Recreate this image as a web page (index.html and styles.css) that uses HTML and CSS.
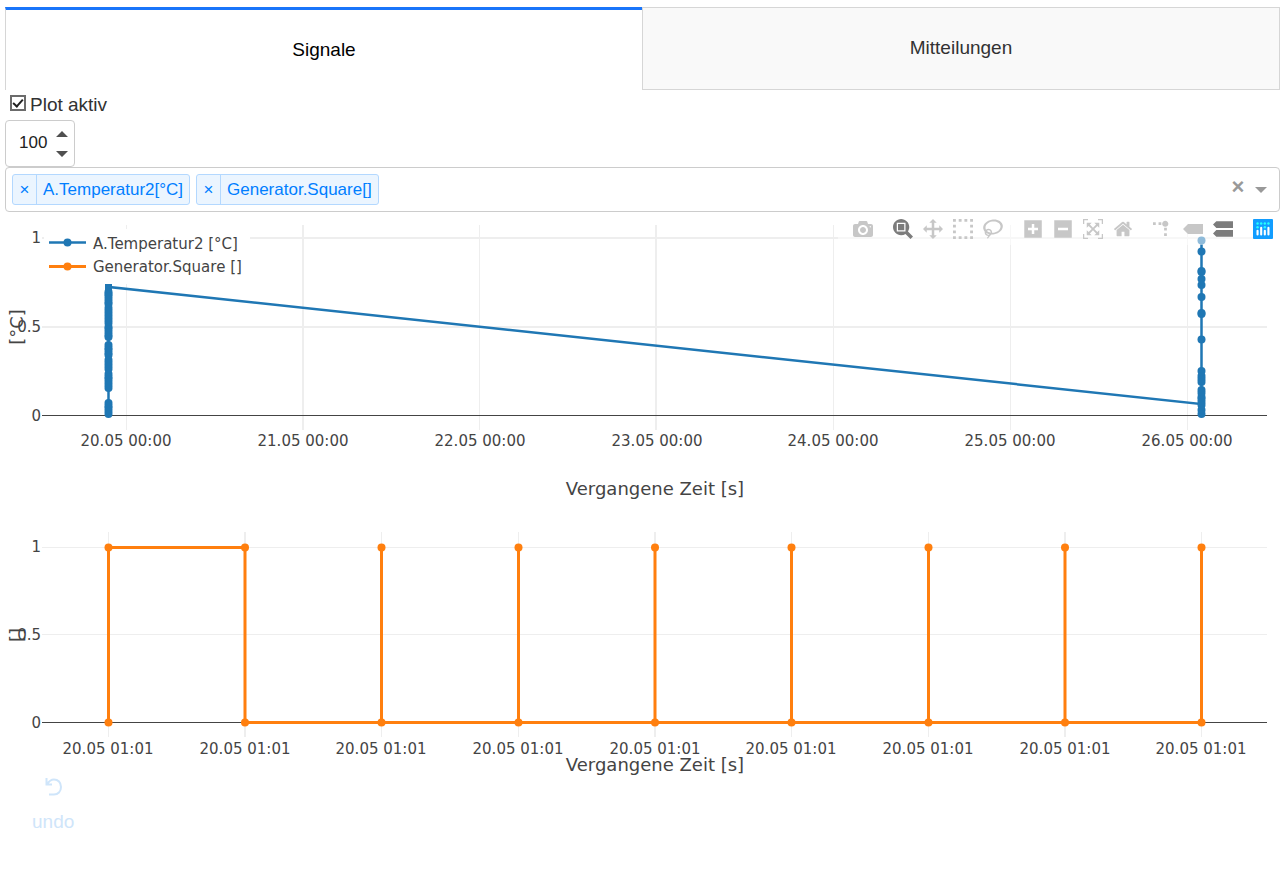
FILE: index.html
```html
<!DOCTYPE html>
<html lang="de">
<head>
<meta charset="utf-8">
<meta name="viewport" content="width=device-width, initial-scale=1">
<title>Signale</title>
<link rel="stylesheet" href="styles.css">
</head>
<body>
<main class="page">
  <div class="tabs" role="tablist">
    <button class="tab tab-selected" type="button" role="tab" aria-selected="true">Signale</button>
    <button class="tab" type="button" role="tab" aria-selected="false">Mitteilungen</button>
  </div>

  <label class="check-row"><input class="check" type="checkbox" checked>Plot aktiv</label>

  <div class="number-box">
    <input class="number-input" type="number" value="100" aria-label="Anzahl">
    <svg class="spinner" viewBox="0 0 12 28" aria-hidden="true"><path d="M0 7L6 1l6 6zM0 21h12l-6 6z"/></svg>
  </div>

  <div class="select-box">
    <div class="chips">
      <span class="chip"><button class="chip-remove" type="button" aria-label="A.Temperatur2 entfernen">×</button><span class="chip-label">A.Temperatur2[°C]</span></span>
      <span class="chip"><button class="chip-remove" type="button" aria-label="Generator.Square entfernen">×</button><span class="chip-label">Generator.Square[]</span></span>
    </div>
    <button class="clear" type="button" aria-label="Alle entfernen">×</button>
    <button class="open" type="button" aria-label="Öffnen"><svg viewBox="0 0 12 6"><path d="M0 0h12L6 6z"/></svg></button>
  </div>

  <div class="plot">
    <svg class="chart" viewBox="5 212 1275 563" role="img" aria-label="Signalverlauf">
      <defs>
        <circle id="dot" r="4"/>
      </defs>
      <g class="grid">
        <path d="M126.5 225V430M479.500 225V430M833.500 225V430M1010.500 225V430M1187.500 225V430"/>
        <path class="wide" d="M303 225V430M656 225V430M42 238H1267M42 327H1267"/>
        <path d="M42 547.500H1267M42 634.500H1267M108.500 532V737M381.500 532V737M518.500 532V737M791.500 532V737M928.500 532V737M1201.500 532V737"/>
        <path class="wide" d="M245 532V737M655 532V737M1065 532V737"/>
      </g>
      <path class="zero" d="M42 415.500H1267M42 722.500H1267"/>

      <g class="blue">
        <path class="line" d="M108.500 414V287L1201.500 404V414V241"/>
        <rect class="fill" x="105" y="284" width="7" height="9"/>
        <g class="fill" id="left-dots"></g>
        <g class="fill" id="right-dots"></g>
      </g>

      <g class="orange">
        <path class="line" d="M108.500 722.500V547.500H245V722.500H1201.500V547.500M381.500 722.500V547.500M518.500 722.500V547.500M655 722.500V547.500M791.500 722.500V547.500M928.500 722.500V547.500M1065 722.500V547.500"/>
        <g class="fill" id="square-dots"></g>
      </g>

      <rect class="legend-bg" x="44" y="229" width="206" height="55"/>
      <g class="blue"><path class="line" d="M49 242.500H86"/><use class="fill" href="#dot" x="67.500" y="242.500"/></g>
      <g class="orange"><path class="line" d="M49 266.500H86"/><use class="fill" href="#dot" x="67.500" y="266.500"/></g>
      <g class="small">
        <text x="93" y="249">A.Temperatur2 [°C]</text>
        <text x="93" y="272">Generator.Square []</text>
      </g>

      <g class="small end">
        <text x="41" y="243">1</text><text x="41" y="332">0.5</text><text x="41" y="421">0</text>
        <text x="41" y="552">1</text><text x="41" y="640">0.5</text><text x="41" y="728">0</text>
      </g>
      <g class="small middle">
        <text x="126" y="446">20.05 00:00</text><text x="303" y="446">21.05 00:00</text><text x="480" y="446">22.05 00:00</text><text x="657" y="446">23.05 00:00</text><text x="833" y="446">24.05 00:00</text><text x="1010" y="446">25.05 00:00</text><text x="1187" y="446">26.05 00:00</text>
      </g>
      <g class="small middle">
        <text x="108" y="754">20.05 01:01</text><text x="245" y="754">20.05 01:01</text><text x="381" y="754">20.05 01:01</text><text x="518" y="754">20.05 01:01</text><text x="655" y="754">20.05 01:01</text><text x="791" y="754">20.05 01:01</text><text x="928" y="754">20.05 01:01</text><text x="1065" y="754">20.05 01:01</text><text x="1201" y="754">20.05 01:01</text>
      </g>
      <g class="title middle">
        <text x="655" y="495">Vergangene Zeit [s]</text>
        <text x="655" y="771">Vergangene Zeit [s]</text>
        <text transform="translate(23 327) rotate(-90)">[°C]</text>
        <text transform="translate(23 635) rotate(-90)">[]</text>
      </g>
    </svg>

    <div class="modebar">
      <div class="group">
        <button class="tool" type="button" aria-label="Bild speichern"><svg viewBox="0 0 1000 1000"><path transform="matrix(1 0 0 -1 0 850)" d="m500 450c-83 0-150-67-150-150 0-83 67-150 150-150 83 0 150 67 150 150 0 83-67 150-150 150z m400 150h-120c-16 0-34 13-39 29l-31 93c-6 15-23 28-40 28h-340c-16 0-34-13-39-28l-31-94c-6-15-23-28-40-28h-120c-55 0-100-45-100-100v-450c0-55 45-100 100-100h800c55 0 100 45 100 100v450c0 55-45 100-100 100z m-400-550c-138 0-250 112-250 250 0 138 112 250 250 250 138 0 250-112 250-250 0-138-112-250-250-250z m365 380c-19 0-35 16-35 35 0 19 16 35 35 35 19 0 35-16 35-35 0-19-16-35-35-35z"/></svg></button>
      </div>
      <div class="group">
        <button class="tool active" type="button" aria-label="Zoom"><svg viewBox="0 0 1000 1000"><path transform="matrix(1 0 0 -1 0 850)" d="m1000-25l-250 251c40 63 63 138 63 218 0 224-182 406-407 406-224 0-406-182-406-406s183-406 407-406c80 0 155 22 218 62l250-250 125 125z m-812 250l0 438 437 0 0-438-437 0z m62 375l313 0 0-312-313 0 0 312z"/></svg></button>
        <button class="tool" type="button" aria-label="Verschieben"><svg viewBox="0 0 1000 1000"><path transform="matrix(1 0 0 -1 0 850)" d="m1000 350l-187 188 0-125-250 0 0 250 125 0-188 187-187-187 125 0 0-250-250 0 0 125-188-188 186-187 0 125 252 0 0-250-125 0 187-188 188 188-125 0 0 250 250 0 0-126 187 188z"/></svg></button>
        <button class="tool" type="button" aria-label="Rechteckauswahl"><svg viewBox="0 0 1000 1000"><path transform="matrix(1 0 0 -1 0 850)" d="m0 850l0-143 143 0 0 143-143 0z m286 0l0-143 143 0 0 143-143 0z m285 0l0-143 143 0 0 143-143 0z m286 0l0-143 143 0 0 143-143 0z m-857-286l0-143 143 0 0 143-143 0z m857 0l0-143 143 0 0 143-143 0z m-857-285l0-143 143 0 0 143-143 0z m857 0l0-143 143 0 0 143-143 0z m-857-286l0-143 143 0 0 143-143 0z m286 0l0-143 143 0 0 143-143 0z m285 0l0-143 143 0 0 143-143 0z m286 0l0-143 143 0 0 143-143 0z"/></svg></button>
        <button class="tool" type="button" aria-label="Lassoauswahl"><svg viewBox="0 0 1031 1000"><path transform="matrix(1 0 0 -1 0 850)" d="m1018 538c-36 207-290 336-568 286-277-48-473-256-436-463 10-57 36-108 76-151-13-66 11-137 68-183 34-28 75-41 114-42l-55-70 0 0c-2-1-3-2-4-3-10-14-8-34 5-45 14-11 34-8 45 4 1 1 2 3 2 5l0 0 113 140c16 11 31 24 45 40 4 3 6 7 8 11 48-3 100 0 151 9 278 48 473 255 436 462z m-624-379c-80 14-149 48-197 96 42 42 109 47 156 9 33-26 47-66 41-105z m-187-74c-19 16-33 37-39 60 50-32 109-55 174-68-42-25-95-24-135 8z m360 75c-34-7-69-9-102-8 8 62-16 128-68 170-73 59-175 54-244-5-9 20-16 40-20 61-28 159 121 317 333 354s407-60 434-217c28-159-121-318-333-355z"/></svg></button>
      </div>
      <div class="group">
        <button class="tool" type="button" aria-label="Vergrößern"><svg viewBox="0 0 875 1000"><path transform="matrix(1 0 0 -1 0 850)" d="m1 787l0-875 875 0 0 875-875 0z m687-500l-187 0 0-187-125 0 0 187-188 0 0 125 188 0 0 187 125 0 0-187 187 0 0-125z"/></svg></button>
        <button class="tool" type="button" aria-label="Verkleinern"><svg viewBox="0 0 875 1000"><path transform="matrix(1 0 0 -1 0 850)" d="m0 788l0-876 876 0 0 876-876 0z m688-500l-500 0 0 125 500 0 0-125z"/></svg></button>
        <button class="tool" type="button" aria-label="Automatisch skalieren"><svg viewBox="0 0 1000 1000"><path transform="matrix(1 0 0 -1 0 850)" d="m250 850l-187 0-63 0 0-62 0-188 63 0 0 188 187 0 0 62z m688 0l-188 0 0-62 188 0 0-188 62 0 0 188 0 62-62 0z m-875-938l0 188-63 0 0-188 0-62 63 0 187 0 0 62-187 0z m875 188l0-188-188 0 0-62 188 0 62 0 0 62 0 188-62 0z m-125 188l-1 0-93-94-156 156 156 156 92-93 2 0 0 250-250 0 0-2 93-92-156-156-156 156 94 92 0 2-250 0 0-250 0 0 93 93 157-156-157-156-93 94 0 0 0-250 250 0 0 0-94 93 156 157 156-157-93-93 0 0 250 0 0 250z"/></svg></button>
        <button class="tool" type="button" aria-label="Achsen zurücksetzen"><svg viewBox="0 0 928 1000"><path transform="matrix(1 0 0 -1 0 850)" d="m786 296v-267q0-15-11-26t-25-10h-214v214h-143v-214h-214q-15 0-25 10t-11 26v267q0 1 0 2t0 2l321 264 321-264q1-1 1-4z m124 39l-34-41q-5-5-12-6h-2q-7 0-12 3l-386 322-386-322q-7-4-13-4-7 2-12 7l-35 41q-4 5-3 13t6 12l401 334q18 15 42 15t43-15l136-114v109q0 8 5 13t13 5h107q8 0 13-5t5-13v-227l122-102q5-5 6-12t-4-13z"/></svg></button>
      </div>
      <div class="group">
        <button class="tool" type="button" aria-label="Hilfslinien"><svg viewBox="0 0 1000 1000"><path transform="matrix(1.5 0 0 -1.5 0 850)" d="M512 409c0-57-46-104-103-104-57 0-104 47-104 104 0 57 47 103 104 103 57 0 103-46 103-103z m-327-39l92 0 0 92-92 0z m-185 0l92 0 0 92-92 0z m370-186l92 0 0 93-92 0z m0-184l92 0 0 92-92 0z"/></svg></button>
        <button class="tool" type="button" aria-label="Nächster Wert"><svg viewBox="0 0 1500 1000"><path transform="matrix(1 0 0 -1 0 850)" d="m375 725l0 0-375-375 375-374 0-1 1125 0 0 750-1125 0z"/></svg></button>
        <button class="tool active" type="button" aria-label="Werte vergleichen"><svg viewBox="0 0 1125 1000"><path transform="matrix(1 0 0 -1 0 850)" d="m187 786l0 2-187-188 188-187 0 0 937 0 0 373-938 0z m0-499l0 1-187-188 188-188 0 0 937 0 0 376-938-1z"/></svg></button>
      </div>
      <div class="group">
        <a class="tool logo" href="#" aria-label="Plotly"><svg viewBox="0 0 132 132"><rect class="logo-bg" width="132" height="132" rx="6"/><g class="logo-dots"><circle cx="30" cy="30" r="8"/><circle cx="54" cy="30" r="8"/><circle cx="78" cy="30" r="8"/><circle cx="102" cy="30" r="8"/><circle cx="30" cy="54" r="8"/><circle cx="78" cy="54" r="8"/></g><path class="logo-bars" d="M30 78v24M54 58v44M78 78v24M102 58v44"/></svg></a>
      </div>
    </div>
  </div>

  <button class="undo" type="button">
    <svg viewBox="0 0 17 18" aria-hidden="true"><path d="M1.500 0V6.500H7M2 6.500C4 3 6 1.500 9 1.500C13 1.500 16 4.500 16 9C16 13.500 13 16.500 9 16.500H4"/></svg>
    <span>undo</span>
  </button>
</main>
<script src="plot.js"></script>
</body>
</html>
```

FILE: styles.css
```css
* { box-sizing: border-box; }
body {
  margin: 0;
  color: #323232;
  background: #fff;
  font: 19px/30px "Liberation Sans", Arial, sans-serif;
}
button, input { font: inherit; color: inherit; margin: 0; padding: 0; }
button { border: 0; background: none; cursor: pointer; }
.page { padding: 7px 7px 0 5px; }

.tabs { display: flex; }
.tab {
  flex: 1;
  height: 83px;
  padding-bottom: 2px;
  background: #f9f9f9;
  border: 1px solid #d6d6d6;
}
.tab-selected {
  padding: 0;
  color: #000;
  background: #fff;
  border-width: 3px 0 0 1px;
  border-top-color: #1975fa;
}

.check-row { display: flex; align-items: center; width: max-content; gap: 4px; padding-left: 5px; }
.check {
  appearance: none;
  display: flex;
  justify-content: center;
  align-items: flex-start;
  width: 16px;
  height: 16px;
  margin-bottom: 4px;
  border: 2px solid #6b6b6b;
}
.check:checked::after {
  content: "";
  box-sizing: border-box;
  width: 6px;
  height: 10px;
  border: solid #222;
  border-width: 0 2px 2px 0;
  transform: rotate(42deg);
}

.number-box {
  display: flex;
  align-items: center;
  width: 70px;
  height: 47px;
  padding: 0 6px 0 13px;
  border: 1px solid #ccc;
  border-radius: 4px;
}
.number-input {
  flex: 1;
  min-width: 0;
  padding-bottom: 2px;
  border: 0;
  outline: 0;
  font-size: 17px;
  color: #222;
  appearance: textfield;
}
.number-input::-webkit-inner-spin-button { display: none; }
.spinner { width: 12px; height: 28px; fill: #505050; }

.select-box {
  display: flex;
  align-items: center;
  min-height: 45px;
  padding: 0 12px 0 6px;
  border: 1px solid #ccc;
  border-radius: 4px;
}
.chips { display: flex; flex: 1; flex-wrap: wrap; gap: 6px; }
.chip {
  display: flex;
  height: 31px;
  font-size: 17px;
  line-height: 29px;
  color: #007eff;
  background: #ebf5ff;
  border: 1px solid #b3d8ff;
  border-radius: 3px;
}
.chip-remove { width: 24px; border-right: 1px solid #b3d8ff; line-height: 27px; }
.chip-label { padding: 0 6px; }
.clear { width: 20px; color: #999; font-size: 22px; font-weight: bold; margin-right: 7px; line-height: 30px; padding-bottom: 5px; }
.open { display: flex; }
.open svg { width: 12px; height: 6px; fill: #999; }

.plot { position: relative; }
.chart { display: block; width: 100%; height: auto; fill: #444; }
.chart text { font-family: "DejaVu Sans", Verdana, sans-serif; fill: #444; }
.small { font-size: 15px; }
.title { font-size: 18px; }
.end { text-anchor: end; }
.middle { text-anchor: middle; }
.grid { fill: none; stroke: #eee; stroke-width: 1; }
.wide { stroke-width: 2; }
.zero { stroke: #444; stroke-width: 1; }
.line { fill: none; stroke-width: 2.500; }
.blue .line { stroke: #1f77b4; }
.orange .line { stroke: #ff7f0e; stroke-width: 3; }
.blue .fill { fill: #1f77b4; }
.orange .fill { fill: #ff7f0e; }
.legend-bg { fill: #fff; }

.modebar { position: absolute; top: 2px; right: 2px; display: flex; }
.group { display: flex; padding-left: 10px; background: rgba(255, 255, 255, 0.5); }
.tool { display: flex; padding: 5px; height: 31px; }
.tool svg { width: 20px; height: 20px; fill: #c7c7c7; }
.active svg { fill: #7c7c7c; }
.logo .logo-bg { fill: #119dff; }
.logo .logo-dots { fill: #25fefd; }
.logo .logo-bars { stroke: #fff; stroke-width: 14; stroke-linecap: round; }

.undo {
  display: flex;
  flex-direction: column;
  align-items: center;
  gap: 11px;
  margin-left: 27px;
  padding-top: 3px;
  color: #cfe5fa;
}
.undo svg { width: 17px; height: 18px; fill: none; stroke: currentColor; stroke-width: 2; }
```

FILE: plot.js
```
const addDots = (id, points) => {
  const group = document.getElementById(id);
  for (const [x, y] of points) {
    const dot = document.createElementNS("http://www.w3.org/2000/svg", "use");
    dot.setAttribute("href", "#dot");
    dot.setAttribute("x", x);
    dot.setAttribute("y", y);
    group.appendChild(dot);
  }
};

const left = [
  292, 294, 296, 299, 302, 304, 308, 311, 314, 317, 320, 323, 327, 329, 332, 335, 337,
  345, 348, 350, 353, 355, 360, 363, 366, 369, 374, 377, 379, 382, 385, 388,
  403, 406, 408, 411, 414
];
const right = [240.5, 251.5, 271, 272, 279, 285, 297, 313, 314, 339.5, 371, 376, 379, 382, 390, 393, 397, 399, 402, 405, 410, 414];
const edges = [108.5, 245, 381.5, 518.5, 655, 791.5, 928.5, 1065, 1201.5];

addDots("left-dots", left.map((y) => [108.5, y]));
addDots("right-dots", right.map((y) => [1201.5, y]));
addDots("square-dots", edges.flatMap((x) => [[x, 547.5], [x, 722.5]]));
```
